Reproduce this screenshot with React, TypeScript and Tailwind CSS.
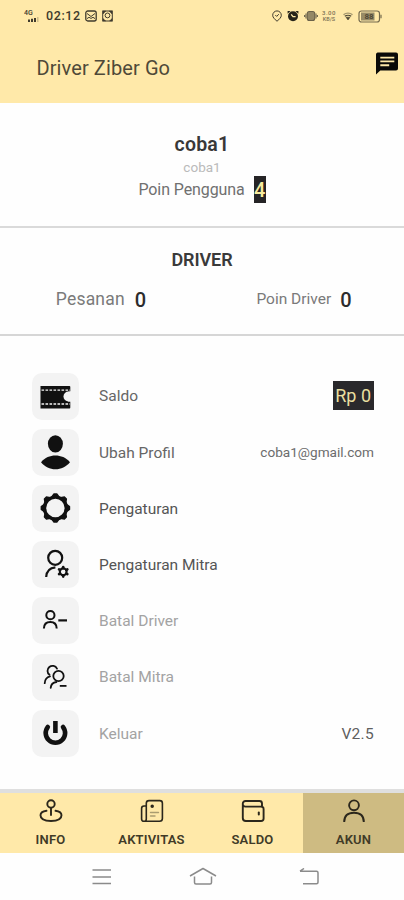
import { ReactNode } from 'react';

const INK = '#111111';

const Tile = ({ children }: { children: ReactNode }) => (
  <div className="w-[47px] h-[47px] rounded-[10px] bg-[#f3f3f3] flex-shrink-0">
    <svg width="47" height="47" viewBox="0 0 47 47" fill="none" stroke={INK} strokeWidth="2" strokeLinecap="round">
      {children}
    </svg>
  </div>
);

const TicketIcon = () => (
  <>
    <path d="M8.5 13H37.5Q38.3 13 38.3 14V18.3A5.2 5.2 0 0 0 38.3 28.7V34.5Q38.3 35.5 37.5 35.5H8.5Z" fill={INK} stroke="none" />
    <path d="M9.5 17.1H38M9.5 31H38" stroke="#f3f3f3" strokeWidth="1.3" strokeDasharray="2.6 1.4" strokeLinecap="butt" />
    <circle cx="36.5" cy="23.5" r="5" fill="#f3f3f3" stroke="none" />
  </>
);

const ProfileIcon = () => (
  <g fill={INK} stroke="none">
    <ellipse cx="23.4" cy="14.8" rx="7.5" ry="8.6" />
    <path d="M9 33.2C13 28.5 18 26.5 23.4 26.5S34 28.5 38 33.2C34 38 29 40.2 23.4 40.2S13 38 9 33.2Z" />
  </g>
);

const GearIcon = () => (
  <>
    <circle cx="23.4" cy="23" r="10.9" strokeWidth="3.4" />
    {[0, 45, 90, 135, 180, 225, 270, 315].map((a) => (
      <path key={a} d="M19.8 12L22 8.9H24.8L27 12Z" fill={INK} strokeWidth="1.4" strokeLinejoin="round" transform={`rotate(${a} 23.4 23)`} />
    ))}
  </>
);

const PartnerIcon = () => (
  <>
    <circle cx="23.2" cy="16.8" r="7" strokeWidth="2.2" />
    <path d="M14.2 36C14.5 30.5 18 26.8 23.4 26.3" strokeWidth="2.2" strokeLinecap="butt" />
    <circle cx="31.2" cy="30.8" r="3.4" strokeWidth="2.1" />
    {[0, 60, 120, 180, 240, 300].map((a) => (
      <path key={a} d="M31.2 27.2V26" strokeWidth="2.6" transform={`rotate(${a} 31.2 30.8)`} />
    ))}
  </>
);

const CancelDriverIcon = () => (
  <>
    <circle cx="18.4" cy="18.2" r="4.1" />
    <path d="M11.9 31.5C12 27.2 14.5 25 18.3 25S24.6 27.2 24.7 31.5" strokeLinecap="butt" />
    <path d="M26.3 23.4H35" strokeLinecap="butt" strokeWidth="2.2" />
  </>
);

const CancelPartnerIcon = () => (
  <>
    <path d="M17.5 20.8A5 5 0 1 1 25 14.6" strokeWidth="1.8" />
    <path d="M12.7 29.2C12.9 25.5 14.8 23.1 18 22.3" strokeWidth="1.8" />
    <circle cx="26.5" cy="22" r="5.2" strokeWidth="1.8" />
    <path d="M18.7 33.8C19 30.5 21 28.4 24.4 28" strokeWidth="1.8" />
    <path d="M27.8 31.9H34.5" strokeWidth="1.8" strokeLinecap="butt" />
  </>
);

const PowerIcon = () => (
  <>
    <path d="M15.8 17A9.7 9.7 0 1 0 31 17" strokeWidth="4.6" />
    <path d="M23.4 11V23" strokeWidth="4.6" strokeLinecap="butt" />
  </>
);

const menu = [
  { label: 'Saldo', icon: <TicketIcon />, color: 'text-[#666]', right: <span className="mr-[0.5px] bg-[#2a292c] text-[#e9dfa0] text-[18px] leading-[29px] px-[2.5px] -mt-[2px]">Rp 0</span> },
  { label: 'Ubah Profil', icon: <ProfileIcon />, color: 'text-[#666]', right: <span className="text-[#6c6c6c] text-[13.6px]">coba1@gmail.com</span> },
  { label: 'Pengaturan', icon: <GearIcon />, color: 'text-[#555]' },
  { label: 'Pengaturan Mitra', icon: <PartnerIcon />, color: 'text-[#555]' },
  { label: 'Batal Driver', icon: <CancelDriverIcon />, color: 'text-[#a3a3a3]' },
  { label: 'Batal Mitra', icon: <CancelPartnerIcon />, color: 'text-[#a3a3a3]' },
  { label: 'Keluar', icon: <PowerIcon />, color: 'text-[#a3a3a3]', right: <span className="text-[#5f5f5f] text-[15.5px] tracking-[0.3px] pt-[2px]">V2.5</span> },
];

const tabs = [
  { label: 'INFO', icon: (
    <>
      <circle cx="12" cy="5" r="3.7" />
      <path d="M12 9V16M7.5 11.8C4 12.3 1.5 13.7 1.5 16.3C1.5 20 6 22 12 22S22.5 20 22.5 16.3C22.5 13.7 20 12.3 16.5 11.8" />
    </>
  ) },
  { label: 'AKTIVITAS', icon: (
    <>
      <path d="M6.3 7H4C2.4 7 1.6 8 1.6 9.5V20C1.6 21.6 2.6 22.3 4 22.3H19.5C21.3 22.3 22.4 21.3 22.4 19.5V4.2C22.4 2.5 21.4 1.6 19.8 1.6H9C7.3 1.6 6.3 2.6 6.3 4.2V20C6.3 21.5 5.6 22.3 4.2 22.3" strokeWidth="1.6" />
      <circle cx="12.2" cy="7.3" r="0.8" />
      <path d="M10.5 13.5H18.5M10.5 17H15" strokeWidth="1.4" strokeOpacity="0.4" />
    </>
  ) },
  { label: 'SALDO', icon: (
    <>
      <path d="M21 7V4.5C21 3 20 2 18.5 2H4.5C3 2 1.8 3 1.8 4.6V19C1.8 21 3 22 4.8 22H20C21.8 22 22.6 21 22.6 19.5V10.2C22.6 8.4 21.8 7.6 20 7.6H4.5C2.8 7.6 1.8 6.5 1.8 5" />
      <path d="M17.8 13.6V15.6" strokeWidth="2" />
    </>
  ) },
  { label: 'AKUN', icon: (
    <>
      <circle cx="12" cy="6.3" r="4.9" />
      <path d="M2.2 23C2.2 17 5.8 13.8 12 13.8S21.8 17 21.8 23" strokeLinecap="butt" />
    </>
  ), active: true },
];

const StatusBar = () => (
  <div className="h-8 pl-6 pr-[22px] flex items-center justify-between text-[#403b2d]">
    <div className="flex items-center">
      <svg width="16" height="14" viewBox="0 0 16 14" fill="currentColor">
        <text x="0" y="6" fontSize="7" fontWeight="500" fontFamily="Roboto, sans-serif">4G</text>
        <path d="M4 10.5H6V13H4ZM7 9.8H9V13H7ZM10 9H12V13H10Z" />
        <path d="M13 8H14.5V13H13Z" opacity="0.25" />
      </svg>
      <span className="ml-[6px] w-[35px] text-[12.5px] font-medium leading-4 tracking-[0.6px]">02:12</span>
      <svg className="ml-[4px]" width="12" height="12" viewBox="0 0 12 12" fill="none" stroke="currentColor" strokeWidth="1.3">
        <rect x="0.8" y="1" width="10.4" height="10" rx="2" />
        <path d="M2 3.5L6 6.5L10 3.5M2 8.6L4 7.3L6 8.4L8 7.3L10 8.6" strokeWidth="1" />
      </svg>
      <svg className="ml-[5px]" width="11" height="12" viewBox="0 0 11 12" fill="none" stroke="currentColor" strokeWidth="1">
        <rect x="0.7" y="1" width="9.6" height="10" />
        <circle cx="5.5" cy="5.4" r="2.4" />
        <path d="M1 1H4L1 4ZM7 1H10V4ZM1 11V8.5L3.8 11ZM10 11V8.5L7.5 11Z" fill="currentColor" strokeWidth="0.4" />
      </svg>
    </div>
    <div className="flex items-center">
      <svg width="10" height="12" viewBox="0 0 10 12" fill="none" stroke="currentColor" strokeWidth="1">
        <path d="M5 11.3L2 8.3A4.3 4.3 0 1 1 8 8.3Z" />
        <path d="M3.3 5L4.7 6.4L6.8 4.2" />
      </svg>
      <svg className="ml-[5px]" width="12" height="12" viewBox="0 0 12 12" fill="#262319">
        <circle cx="6" cy="6.3" r="5" />
        <path d="M.6 3.8V1H3.6ZM11.4 3.8V1H8.4Z" />
        <path d="M4.2 4.3L6 6.6H8.6" fill="none" stroke="#ffe9a9" strokeWidth="1.3" />
      </svg>
      <svg className="ml-[5px]" width="14" height="12" viewBox="0 0 14 12" fill="none" stroke="#6b624a" strokeWidth="1.1">
        <rect x="3.3" y="1.5" width="7.4" height="9" rx="2" fill="#948866" />
        <path d="M2 3.6V8.4M.6 5V7M12 3.6V8.4M13.4 5V7" />
      </svg>
      <div className="ml-[2px] w-[18px] flex flex-col items-center text-[6px] leading-[7px] font-medium text-[#7b7155]">
        <span className="tracking-[0.5px]">3.00</span>
        <span className="text-[5.5px]">KB/S</span>
      </div>
      <svg className="ml-[5px]" width="10" height="9" viewBox="0 0 10 9" fill="none" stroke="#4c4634" strokeWidth="1.3">
        <path d="M.5 2.8C3 .6 7 .6 9.5 2.8" opacity="0.5" />
        <path d="M1.8 4.3C3.5 3 6.5 3 8.2 4.3" />
        <path d="M3 5.2H7L5 8Z" fill="#4c4634" strokeWidth="0.6" />
      </svg>
      <svg className="ml-[5px]" width="24" height="13" viewBox="0 0 24 13" fill="none" stroke="#746a4e" strokeWidth="1.2">
        <rect x="1" y="1" width="20.5" height="11" rx="2.5" />
        <path d="M3 2.5H16.5V10.5H3Z" fill="#978b67" stroke="none" />
        <path d="M23 4.8V8.2" />
        <text x="6.5" y="9.3" fontSize="8" fontWeight="700" fill="#4f4836" stroke="none" fontFamily="Roboto, sans-serif">88</text>
      </svg>
    </div>
  </div>
);

export default function App() {
  return (
    <div className="w-[404px] h-[900px] bg-[#fefefe] flex flex-col overflow-hidden font-['Roboto',sans-serif]">
      <header className="h-[102.5px] flex-shrink-0 bg-[#ffe9a9]">
        <StatusBar />
        <div className="h-[71px] pl-[36.5px] pr-[5px] flex items-center justify-between">
          <h1 className="text-[20px] text-[#4f4938] pt-px tracking-[0.1px]">Driver Ziber Go</h1>
          <svg className="-mt-[9px]" width="25" height="25" viewBox="0 0 25 25">
            <path d="M3.5 1.5H22A2 2 0 0 1 24 3.5V17.5A2 2 0 0 1 22 19.5H6.3L2 23.5V3.5A2 2 0 0 1 3.5 1.5Z" fill="#0b0a08" />
            <path d="M6.3 6.6H20.3M6.3 10.4H20.3M6.3 14.2H15.2" stroke="#ffe9a9" strokeWidth="1.9" />
          </svg>
        </div>
      </header>

      <section className="h-[125px] flex-shrink-0 border-b-2 border-[#dadada] flex flex-col items-center pt-[30px]">
        <h2 className="text-[19.5px] leading-6 font-semibold text-[#383838] tracking-[0.2px]">coba1</h2>
        <p className="text-[13.5px] leading-4 mt-[2px] text-[#bababa]">coba1</p>
        <div className="flex items-center mt-px">
          <span className="text-[16px] leading-7 text-[#707070] tracking-[-0.1px]">Poin Pengguna</span>
          <span className="ml-[9px] w-[12px] h-[27px] bg-[#252426] text-[#f6eb9d] text-[20px] leading-[28px] font-medium text-center">4</span>
        </div>
      </section>

      <section className="h-[108.5px] flex-shrink-0 border-b-2 border-[#d6d6d6] pt-[20px]">
        <h2 className="text-center text-[18px] leading-6 font-semibold text-[#3a3a3a] tracking-[-0.1px]">DRIVER</h2>
        <div className="flex mt-[14px] h-7 items-center">
          <div className="w-1/2 flex items-center justify-center">
            <span className="text-[17.5px] text-[#7a7a7a] tracking-[0.2px]">Pesanan</span>
            <span className="ml-[10px] text-[20px] font-medium text-[#2c2c2c]">0</span>
          </div>
          <div className="w-1/2 flex items-center justify-center pl-[2px]">
            <span className="text-[15.5px] text-[#7a7a7a]">Poin Driver</span>
            <span className="ml-[9px] text-[20px] font-medium text-[#2c2c2c]">0</span>
          </div>
        </div>
      </section>

      <main className="flex-1 min-h-0 pt-[32px] pl-[32px] pr-[30px]">
        {menu.map((item) => (
          <div key={item.label} className="h-[56.2px] flex items-center">
            <Tile>{item.icon}</Tile>
            <span className={`ml-[20px] pt-[2px] text-[15.5px] flex-1 ${item.color}`}>{item.label}</span>
            {item.right}
          </div>
        ))}
      </main>

      <nav className="h-[64.5px] flex-shrink-0 border-t-4 border-[#dfdfdf] bg-[#ffe9a9] flex">
        {tabs.map((tab) => (
          <div key={tab.label} className={`flex-1 flex flex-col items-center pt-[6px] ${tab.active ? 'bg-[#cebb82]' : ''}`}>
            <svg width="24" height="24" viewBox="0 0 24 24" fill="none" stroke="#2b271c" strokeWidth="1.9" strokeLinecap="round">
              {tab.icon}
            </svg>
            <span className="mt-[9px] text-[13px] leading-4 font-semibold text-[#403a27] tracking-[0.2px]">{tab.label}</span>
          </div>
        ))}
      </nav>

      {/* system navigation */}
      <div className="h-[47px] flex-shrink-0 flex items-center pl-[92px]">
        <svg width="20" height="18" viewBox="0 0 20 18" fill="none" stroke="#8b8b8b" strokeWidth="1.7">
          <path d="M.5 2H19M.5 9H19M.5 15.5H19" />
        </svg>
        <svg className="ml-[77px]" width="28" height="20" viewBox="0 0 28 20" fill="none" stroke="#8b8b8b" strokeWidth="1.5">
          <path d="M1 9L14 1.5L27 9M5.5 9.5V15.5Q5.5 17 7 17H21Q22.5 17 22.5 15.5V9.5" strokeLinejoin="round" />
        </svg>
        <svg className="ml-[82px]" width="22" height="18" viewBox="0 0 22 18" fill="none" stroke="#8b8b8b" strokeWidth="1.5">
          <path d="M1 3.2H17.5Q19 3.2 19 4.7V14.3Q19 15.8 17.5 15.8H4M5 .5L1 3.2" />
        </svg>
      </div>
    </div>
  );
}
